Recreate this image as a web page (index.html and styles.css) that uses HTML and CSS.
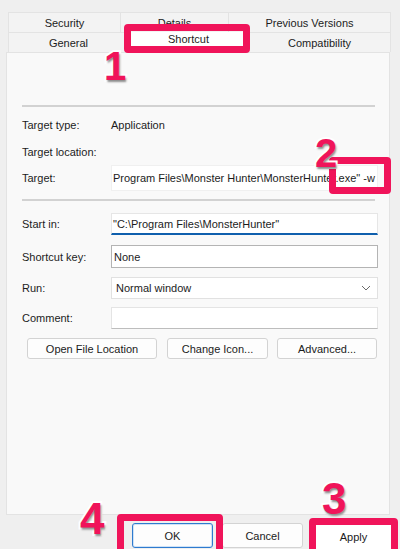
FILE: index.html
```html
<!DOCTYPE html>
<html>
<head>
<meta charset="utf-8">
<link rel="stylesheet" href="styles.css">
</head>
<body>
<div class="dialog">
  <div class="tabs">
    <div class="tab-row r1">
      <div class="tab">Security</div>
      <div class="tab">Details</div>
      <div class="tab">Previous Versions</div>
    </div>
    <div class="tab-row r2">
      <div class="tab">General</div>
      <div class="tab active">Shortcut</div>
      <div class="tab">Compatibility</div>
    </div>
  </div>

  <div class="panel">
    <div class="header-space"></div>
    <div class="sep"></div>
    <div class="field f-type"><span class="label">Target type:</span><span class="value">Application</span></div>
    <div class="field f-loc"><span class="label">Target location:</span><span class="value"></span></div>
    <div class="field f-target"><span class="label">Target:</span><div class="box box-plain">Program Files\Monster Hunter\MonsterHunter.exe" -w</div></div>
    <div class="sep sep2"></div>
    <div class="field f-start"><span class="label">Start in:</span><div class="box box-focus">"C:\Program Files\MonsterHunter"</div></div>
    <div class="field f-key"><span class="label">Shortcut key:</span><div class="box box-dark">None</div></div>
    <div class="field f-run"><span class="label">Run:</span>
      <div class="box box-select"><span>Normal window</span>
        <svg class="chev" width="10" height="6" viewBox="0 0 10 6"><polyline points="1,1 5,5 9,1" fill="none" stroke="#6a6a6a" stroke-width="1"/></svg>
      </div>
    </div>
    <div class="field f-comment"><span class="label">Comment:</span><div class="box box-light"></div></div>
    <div class="actions">
      <div class="btn b-open">Open File Location</div>
      <div class="btn b-icon">Change Icon...</div>
      <div class="btn b-adv">Advanced...</div>
    </div>
  </div>

  <div class="footer">
    <div class="btn fbtn default">OK</div>
    <div class="btn fbtn">Cancel</div>
    <div class="btn fbtn">Apply</div>
  </div>

  <div class="mark m1"></div>
  <div class="mark m2"></div>
  <div class="mark m3"></div>
  <div class="mark m4"></div>

  <div class="num n1">1</div>
  <div class="num n2">2</div>
  <div class="num n3">3</div>
  <div class="num n4">4</div>
</div>
</body>
</html>
```

FILE: styles.css
```css
* { box-sizing: border-box; }
html, body {
  margin: 0;
  padding: 0;
}
body {
  width: 400px;
  height: 549px;
  overflow: hidden;
  background: #efefef;
  font-family: "Liberation Sans", Arial, sans-serif;
  font-size: 11px;
  color: #1c1c1c;
}
.dialog {
  position: relative;
  width: 400px;
  height: 549px;
  padding-top: 12px;
}

/* tabs */
.tabs {
  margin-left: 8px;
  width: 383px;
}
.tab-row {
  display: grid;
  height: 20px;
}
.r1 { grid-template-columns: 112px 108px 163px; }
.r2 { grid-template-columns: 120px 120px 143px; }
.tab {
  display: flex;
  align-items: center;
  justify-content: center;
  background: #f3f3f3;
  border-top: 1px solid #e3e3e3;
  border-left: 1px solid #e3e3e3;
  padding-top: 1px;
}
.tab:last-child { border-right: 1px solid #e3e3e3; }
.tab.active {
  background: #ffffff;
  border-top: none;
  padding-top: 0;
  padding-bottom: 6px;
}

/* panel */
.panel {
  margin-left: 6px;
  width: 384px;
  height: 463px;
  background: #f9f9f9;
  border: 1px solid #e3e3e3;
  padding-left: 15px;
}
.header-space { height: 52px; }
.sep {
  width: 353px;
  height: 2px;
  background: #d2d2d2;
}
.field {
  display: grid;
  grid-template-columns: 89px 267px;
  align-items: center;
}
.f-type { height: 20px; margin-top: 8px; }
.f-loc { height: 20px; margin-top: 7px; }
.f-target { height: 26px; margin-top: 3px; }
.sep2 { margin-top: 8px; }
.f-start { height: 22px; margin-top: 12px; }
.f-key { height: 23px; margin-top: 10px; }
.f-run { height: 22px; margin-top: 9px; }
.f-comment { height: 22px; margin-top: 8px; }

.box {
  height: 100%;
  background: #ffffff;
  display: flex;
  align-items: center;
  padding-left: 1px;
  white-space: nowrap;
  overflow: hidden;
  border: 1px solid #ececec;
}
.box-plain { border-color: #f0f0f0; }
.box-focus {
  border: 1px solid #e6e6e6;
  border-bottom: 2px solid #0f5fad;
}
.box-dark { border: 1px solid #b4b4b4; padding-left: 2px; }
.box-select {
  border: 1px solid #e1e1e1;
  padding-left: 4px;
  justify-content: space-between;
  padding-right: 6px;
}
.box-light {
  border: 1px solid #e4e4e4;
  border-bottom-color: #bdbdbd;
}
.chev { flex: none; }

.actions {
  display: flex;
  margin-top: 9px;
  margin-left: 5px;
  height: 21px;
}
.btn {
  display: flex;
  align-items: center;
  justify-content: center;
  background: #fdfdfd;
  border: 1px solid #d3d3d3;
  border-radius: 3px;
  color: #1b1b1b;
}
.b-open { width: 130px; }
.b-icon { width: 101px; margin-left: 10px; }
.b-adv { width: 100px; margin-left: 9px; }

/* footer */
.footer {
  display: flex;
  justify-content: flex-end;
  gap: 9px;
  margin-top: 8px;
  padding-right: 7px;
  height: 25px;
}
.fbtn { width: 81px; height: 25px; }
.fbtn.default { border: 1px solid #2e7bcf; box-shadow: inset 0 0 0 1px #cfe2f6; }

/* annotation overlays */
.mark {
  position: absolute;
  border: 7px solid #f0145a;
  border-radius: 4px;
}
.m1 { left: 124px; top: 24px; width: 126px; height: 29px; }
.m2 { left: 329px; top: 157px; width: 62px; height: 37px; }
.m3 { left: 309px; top: 518px; width: 89px; height: 40px; background: #fff; }
.m3::after {
  content: "Apply";
  position: absolute;
  left: 0; right: 0; top: 6px;
  text-align: center;
  color: #1b1b1b;
}
.m4 { left: 117px; top: 514px; width: 106px; height: 44px; }

.num {
  position: absolute;
  font-family: "Liberation Sans", Arial, sans-serif;
  font-weight: bold;
  line-height: 1;
  color: #f0145a;
  -webkit-text-stroke: 4px #ffffff;
  paint-order: stroke fill;
  text-shadow: 1px 2px 2px rgba(0,0,0,0.45);
}
.n1 { left: 104px; top: 46px; font-size: 40px; }
.n2 { left: 315px; top: 133px; font-size: 40px; }
.n3 { left: 322px; top: 477px; font-size: 44px; }
.n4 { left: 80px; top: 497px; font-size: 44px; }
```
